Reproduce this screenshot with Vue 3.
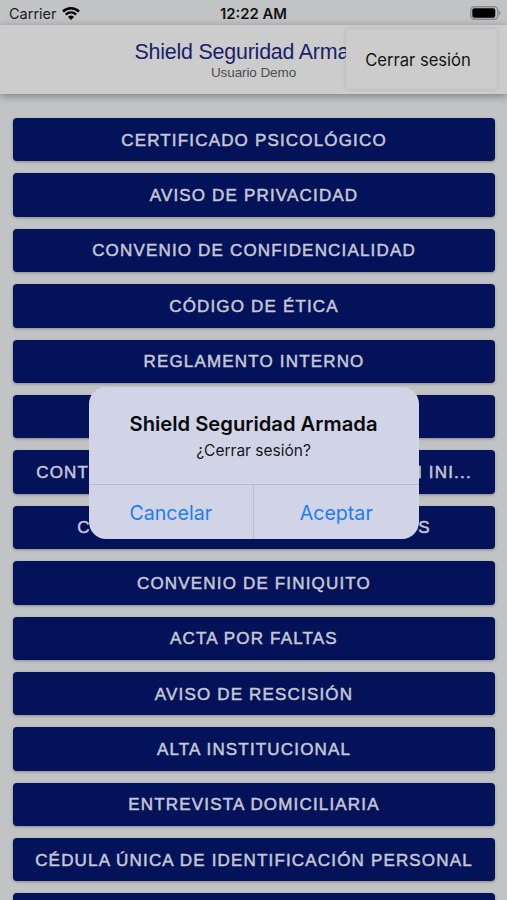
<script setup>
import { ref } from 'vue';

const appName = 'Shield Seguridad Armada';
const showMenu = ref(true);
const showAlert = ref(true);

// Lista de documentos
const documents = [
  'Certificado psicológico',
  'Aviso de privacidad',
  'Convenio de confidencialidad',
  'Código de ética',
  'Reglamento interno',
  'Contrato',
  'Contrato individual de trabajo con ini...',
  'Contrato por tiempo y servicios',
  'Convenio de finiquito',
  'Acta por faltas',
  'Aviso de rescisión',
  'Alta institucional',
  'Entrevista domiciliaria',
  'Cédula única de identificación personal',
  '',
];

const askLogout = () => {
  showAlert.value = true;
};

const closeAlert = () => {
  showAlert.value = false;
  showMenu.value = false;
};
</script>

<template>
  <div class="screen">
    <div class="status-bar">
      <div class="carrier">
        <span>Carrier</span>
        <svg width="18" height="14" viewBox="0 0 18 14">
          <path d="M1 4.6a11.4 11.4 0 0 1 16 0" fill="none" stroke="#050505" stroke-width="2.5" />
          <path d="M3.8 7.6a7.4 7.4 0 0 1 10.4 0" fill="none" stroke="#050505" stroke-width="2.3" />
          <path d="M9 12.9 6 9.9a4.3 4.3 0 0 1 6 0z" fill="#050505" />
        </svg>
      </div>
      <span class="clock">12:22 AM</span>
      <svg class="battery" width="31" height="14" viewBox="0 0 31 14">
        <rect x="0.8" y="0.7" width="27" height="12.6" rx="3.7" fill="none" stroke="#88898b" stroke-width="1.4" />
        <rect x="2.3" y="2.2" width="23" height="9.6" rx="2" fill="#000" />
        <path d="M28.9 4.6c2 .8 2 4 0 4.8z" fill="#88898b" />
      </svg>
    </div>

    <header class="header">
      <h1>{{ appName }}</h1>
      <p>Usuario Demo</p>
      <button v-if="showMenu" class="menu" @click="askLogout">Cerrar sesión</button>
    </header>

    <main class="list">
      <button v-for="doc in documents" :key="doc" class="doc-btn">{{ doc }}</button>
    </main>

    <!-- Confirmación de cierre de sesión -->
    <div v-if="showAlert" class="overlay">
      <div class="alert">
        <div class="alert-body">
          <h2>{{ appName }}</h2>
          <p>¿Cerrar sesión?</p>
        </div>
        <div class="alert-actions">
          <button @click="closeAlert">Cancelar</button>
          <button @click="closeAlert">Aceptar</button>
        </div>
      </div>
    </div>
  </div>
</template>

<style>
body {
  margin: 0;
  overflow: hidden;
}
</style>

<style scoped>
.screen {
  position: relative;
  height: 900px;
  overflow: hidden;
  display: flex;
  flex-direction: column;
  background: #c1c3c5;
  font-family: Inter, "Liberation Sans", sans-serif;
}

button {
  border: none;
  padding: 0;
  background: none;
  font-family: inherit;
}

h1, h2, p {
  margin: 0;
  font-weight: normal;
}

/* Barra de estado */
.status-bar {
  flex: none;
  height: 25px;
  box-sizing: border-box;
  padding: 1px 6px 0 9px;
  display: grid;
  grid-template-columns: 1fr auto 1fr;
  align-items: center;
  color: #111;
}

.carrier {
  display: flex;
  align-items: center;
  gap: 5px;
  padding-top: 1px;
  font-size: 14.5px;
  color: #1c1c1d;
}

.clock {
  padding: 1px 3px 0 0;
  font-size: 14.8px;
  font-weight: 600;
}

.battery {
  justify-self: end;
}

/* Encabezado */
.header {
  position: relative;
  z-index: 1;
  flex: none;
  height: 69px;
  box-sizing: border-box;
  padding-top: 15px;
  background: #cccccc;
  box-shadow: 0 2px 8px rgba(0, 0, 0, 0.36);
  text-align: center;
  font-family: "Liberation Sans", sans-serif;
}

.header h1 {
  font-size: 21.4px;
  letter-spacing: -0.2px;
  line-height: 25px;
  color: #18216a;
}

.header p {
  font-size: 13.5px;
  letter-spacing: -0.1px;
  line-height: 16px;
  color: #4c4c4c;
}

.menu {
  position: absolute;
  top: 4px;
  right: 10px;
  width: 151px;
  height: 60px;
  padding: 1px 7px 0 0;
  border-radius: 4px;
  background: #cccccc;
  box-shadow: 0 0 4px rgba(0, 0, 0, 0.13);
  font-family: Inter, sans-serif;
  font-size: 16.6px;
  color: #151515;
}

/* Botones */
.list {
  display: flex;
  flex-direction: column;
  gap: 12px;
  padding: 24px 12px 0 13px;
}

.doc-btn {
  flex: none;
  height: 43.4px;
  padding-top: 2px;
  border-radius: 4px;
  background: #04125a;
  box-shadow: 0 1px 3px rgba(0, 0, 0, 0.3);
  font-family: "Liberation Sans", sans-serif;
  font-size: 17px;
  letter-spacing: 1.17px;
  text-transform: uppercase;
  white-space: nowrap;
  color: #c5c8d4;
  -webkit-text-stroke: 0.5px #c5c8d4;
}

/* Alerta */
.overlay {
  position: absolute;
  inset: 0;
  z-index: 2;
  display: flex;
  align-items: center;
  justify-content: center;
  padding-top: 26px;
}

.alert {
  width: 330px;
  height: 152px;
  display: flex;
  flex-direction: column;
  border-radius: 17px;
  background: #d1d4e6;
  overflow: hidden;
  text-align: center;
}

.alert-body {
  flex: 1;
  padding-top: 24px;
}

.alert-body h2 {
  font-size: 20.2px;
  font-weight: 600;
  line-height: 26px;
  color: #08080c;
}

.alert-body p {
  padding-top: 1px;
  font-size: 15.5px;
  line-height: 26px;
  color: #16161c;
}

.alert-actions {
  display: flex;
  height: 54px;
  border-top: 1px solid #b9bccc;
}

.alert-actions button {
  flex: 1;
  padding-top: 2px;
  font-size: 19.6px;
  color: #1c7df2;
}

.alert-actions button + button {
  border-left: 1px solid #b9bccc;
}
</style>
